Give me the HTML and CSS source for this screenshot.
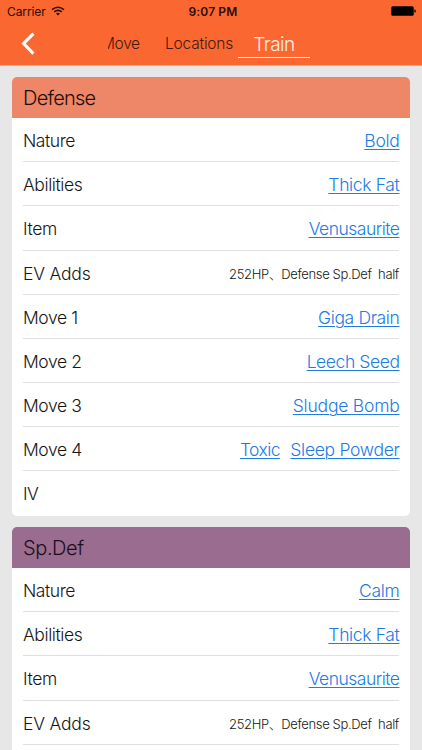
FILE: index.html
```
<!DOCTYPE html>
<html lang="en">
<head>
<meta charset="utf-8">
<title>Train</title>
<link rel="stylesheet" href="styles.css">
</head>
<body>
<header class="top">
  <div class="status">
    <div class="carrier"><span>Carrier</span>
      <svg class="wifi" width="14" height="10" viewBox="0 0 14 10" fill="none" stroke="#2a0d04" stroke-width="1.6"><path d="M1 3.6Q7-1.2 13 3.6M3.2 5.9Q7 2.8 10.8 5.9"/><path d="M5 7.6Q7 6 9 7.6L7 9.6Z" fill="#2a0d04" stroke="none"/></svg>
    </div>
    <div class="time">9:07 PM</div>
    <svg class="battery" width="26" height="10" viewBox="0 0 26 10"><rect x="0.3" y="0.2" width="22.4" height="9.5" rx="1.5"/><path d="M23.4 3.2Q24.9 3.6 24.9 5T23.4 6.8Z"/></svg>
  </div>
  <nav class="nav">
    <svg class="back" width="16" height="24" viewBox="0 0 16 24" fill="none" stroke="#fff" stroke-width="3"><path d="M13.4 1.6L3.6 11.6L13.4 21.6"/></svg>
    <div class="tabs">
      <span class="tab move">Move</span>
      <span class="tab locations">Locations</span>
      <span class="tab active">Train</span>
    </div>
  </nav>
</header>
<main class="content">
  <section class="card">
    <h2 class="title defense">Defense</h2>
    <div class="row"><span class="nature">Nature</span><a class="bold">Bold</a></div>
    <div class="row"><span class="abilities">Abilities</span><a class="fat">Thick Fat</a></div>
    <div class="row"><span class="item">Item</span><a>Venusaurite</a></div>
    <div class="row"><span class="ev">EV Adds</span><span class="note">252HP<i class="comma">、</i>Defense Sp.Def&nbsp; half</span></div>
    <div class="row"><span class="numbered">Move 1</span><a class="drain">Giga Drain</a></div>
    <div class="row"><span class="numbered">Move 2</span><a class="seed">Leech Seed</a></div>
    <div class="row"><span class="numbered">Move 3</span><a class="bomb">Sludge Bomb</a></div>
    <div class="row"><span class="numbered">Move 4</span><div class="links"><a class="toxic">Toxic</a><a class="powder">Sleep Powder</a></div></div>
    <div class="row"><span class="iv">IV</span></div>
  </section>
  <section class="card">
    <h2 class="title spdef">Sp.Def</h2>
    <div class="row"><span class="nature">Nature</span><a class="bold">Calm</a></div>
    <div class="row"><span class="abilities">Abilities</span><a class="fat">Thick Fat</a></div>
    <div class="row"><span class="item">Item</span><a>Venusaurite</a></div>
    <div class="row"><span class="ev">EV Adds</span><span class="note">252HP<i class="comma">、</i>Defense Sp.Def&nbsp; half</span></div>
    <div class="row"></div>
  </section>
</main>
</body>
</html>
```
FILE: styles.css
```
* { box-sizing: border-box; }
html, body { height: 750px; overflow: hidden; }
body {
  margin: 0;
  background: #e7e7e7;
  color: #161616;
  font-family: Inter, "Noto Sans CJK SC", sans-serif;
  font-weight: 300;
}
.top { height: 66px; background: #fb6731; border-bottom: 1px solid #f4a58a; }
.status {
  display: grid;
  grid-template-columns: 1fr auto 1fr;
  align-items: center;
  height: 22px;
  padding: 0 5px 0 7px;
  font-size: 12px;
  color: #2a0d04;
}
.carrier { display: flex; align-items: center; gap: 5px; font-weight: 400; letter-spacing: -0.1px; }
.time { font-weight: 600; letter-spacing: 0.15px; padding-left: 2px; }
.battery { justify-self: end; fill: #000; }
.nav { display: flex; align-items: center; height: 43px; padding-left: 20px; }
.back { flex: none; }
.tabs { display: flex; align-items: center; width: 202px; margin-left: 72px; overflow: hidden; }
.tab { flex: none; height: 34px; line-height: 34px; font-size: 15.5px; color: #45190a; letter-spacing: -0.35px; }
.move { width: 64px; margin-left: -7px; }
.locations { width: 73px; letter-spacing: -0.2px; }
.active { width: 72px; line-height: 30px; height: 28px; border-bottom: 1px solid #fff; font-size: 19px; letter-spacing: -0.5px; color: #fff0e8; text-align: center; }
.content { display: grid; gap: 11.5px; padding: 11px 12px 0; }
.card { overflow: hidden; border-radius: 5px; background: #fff; }
.title { height: 41px; margin: 0; padding-left: 11px; font-size: 20px; line-height: 42px; font-weight: 300; letter-spacing: -0.75px; }
.spdef { letter-spacing: -0.4px; }
.defense { background: #ee8768; color: #240d06; }
.spdef { background: #9a6c8f; color: #1c0e19; }
.row {
  display: flex;
  align-items: center;
  justify-content: space-between;
  height: 44.18px;
  margin: 0 11px;
  padding-top: 2px;
  border-bottom: 1px solid #e0e0e0;
  font-size: 17.5px;
  letter-spacing: -0.5px;
}
.row:last-child { border-bottom-color: transparent; }
.nature, .abilities { letter-spacing: -0.42px; }
.item { letter-spacing: -0.35px; }
.ev { letter-spacing: -0.2px; }
.numbered { letter-spacing: -0.4px; }
.iv { letter-spacing: -0.6px; }
.row a { margin-right: -0.5px; color: #217be5; text-decoration: underline; text-decoration-thickness: 1px; text-underline-offset: 2px; }
.bold { letter-spacing: -0.3px; }
.fat { letter-spacing: -0.34px; }
.drain { letter-spacing: -0.36px; }
.seed { letter-spacing: -0.42px; }
.bomb { letter-spacing: -0.22px; }
.toxic { letter-spacing: -0.6px; }
.powder { letter-spacing: -0.3px; }
.links { display: flex; gap: 11px; }
.note { font-size: 13px; letter-spacing: -0.36px; white-space: pre; }
.comma { font-style: normal; }
```
